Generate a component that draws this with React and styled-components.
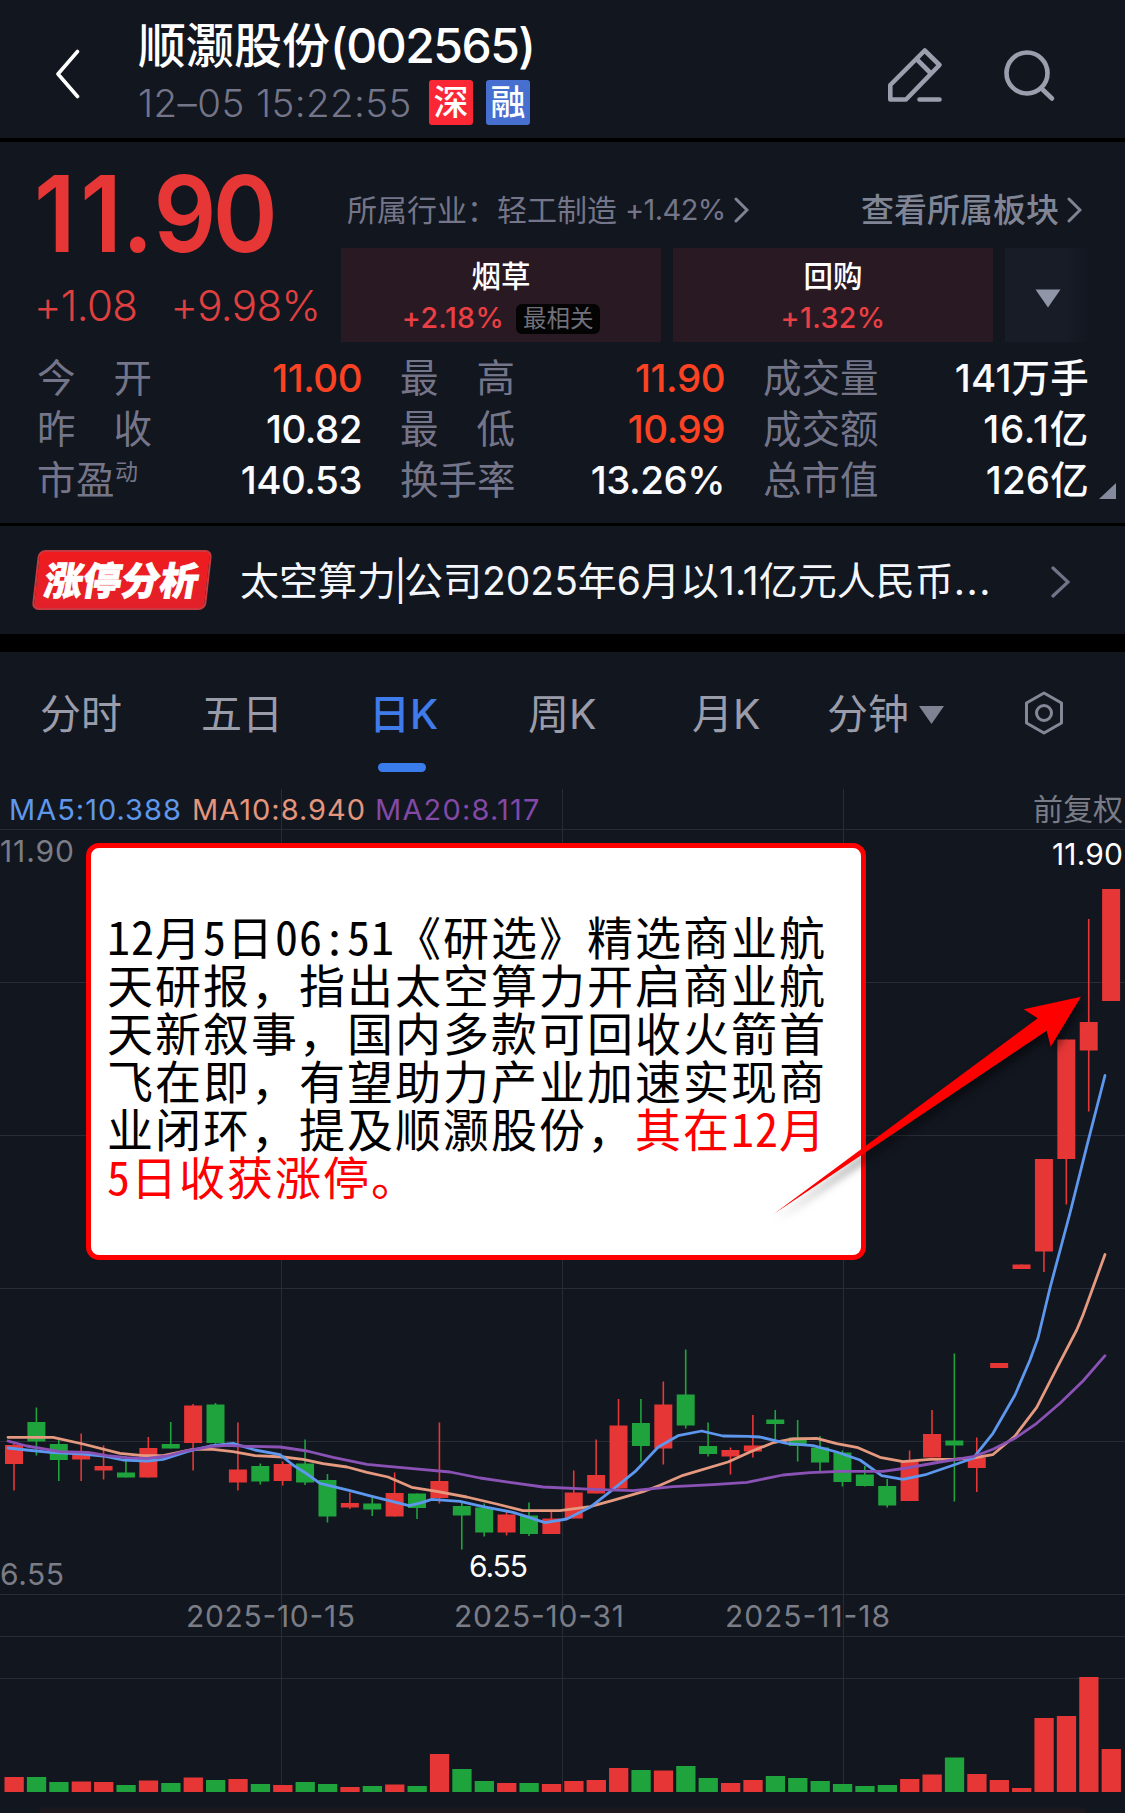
import styled, { createGlobalStyle, css } from 'styled-components';

const RED = '#e63636';
const GREEN = '#1fa33c';
const GRID = '#282c36';
const MUTED = '#747589';

const GlobalStyle = createGlobalStyle`
    * { box-sizing: border-box; }
    body {
        margin: 0;
        background: #12161f;
        font-family: Inter, "Noto Sans CJK SC", sans-serif;
        text-spacing-trim: space-all;
    }
`

const Screen = styled.div`
    width: 1125px;
    height: 1813px;
    overflow: hidden;
    background: #12161f;
    white-space: nowrap;
`

const Divider = styled.div`
    height: ${ p => p.$size }px;
    background: #000;
`

// header
const Header = styled.header`
    display: flex;
    height: 138px;
    padding: 0 63px 0 55px;
`

const BackIcon = styled.svg`
    width: 26px;
    height: 50px;
    margin: 49px 57px 0 0;
`

const Titles = styled.div`
    flex: 1;
    padding-top: 17px;
`

const Title = styled.h1`
    margin: 0;
    font-size: 48px;
    font-weight: 500;
    line-height: 57px;
    letter-spacing: -1.5px;
    color: #fff;
`

const TitleName = styled.span`
    letter-spacing: 0;
`

const SubTitle = styled.div`
    display: flex;
    align-items: center;
    height: 57px;
    color: ${ MUTED };
`

const Time = styled.span`
    width: 291px;
    font-size: 38.5px;
    font-weight: 350;
    letter-spacing: 0.4px;
`

const MarketTag = styled.span`
    width: 44px;
    height: 45px;
    margin-right: 13px;
    border-radius: 3px;
    background: ${ p => p.$color };
    color: #fff;
    font-size: 35px;
    font-weight: 500;
    line-height: 45px;
    text-align: center;
`

const HeaderIcons = styled.div`
    display: flex;
    gap: 60px;
    padding-top: 46px;
`

const HeaderIcon = styled.svg`
    width: 58px;
    height: 58px;
    fill: none;
    stroke: #9b9eac;
    stroke-width: 4.6;
    stroke-linejoin: round;
    stroke-linecap: round;
`

// quote
const Quote = styled.section`
    height: 381px;
`

const QuoteTop = styled.div`
    display: flex;
    height: 210px;
`

const PriceBox = styled.div`
    width: 341px;
    padding: 18px 0 0 34px;
    color: ${ RED };
`

const Price = styled.div`
    font-size: 106px;
    font-weight: 600;
    line-height: 107px;
    letter-spacing: -4px;
    transform: scaleX(0.93);
    transform-origin: left;
`

const Digit = styled.span`
    letter-spacing: ${ p => p.$space }px;
`

const Changes = styled.div`
    display: flex;
    gap: 33px;
    margin-top: 17px;
    font-size: 42px;
    font-weight: 350;
    line-height: 44px;
    letter-spacing: -0.6px;
    color: #e0403f;
`

const Sectors = styled.div`
    flex: 1;
    padding-top: 50px;
`

const IndustryRow = styled.div`
    display: flex;
    justify-content: space-between;
    align-items: center;
    height: 36px;
    padding: 0 43px 0 6px;
    line-height: 36px;
`

const IndustryLink = styled.span`
    display: flex;
    align-items: center;
    gap: 8px;
    font-size: ${ p => p.$size || 30 }px;
    color: ${ p => p.$bright ? '#808595' : MUTED };
    font-weight: ${ p => p.$bright ? 500 : 400 };
`

const Rate = styled.span`
    font-size: 29px;
    letter-spacing: -0.6px;
`

const Cards = styled.div`
    display: flex;
    gap: 12px;
    margin-top: 20px;
`

const Card = styled.div`
    width: 320px;
    height: 94px;
    padding-top: 7px;
    background: #291922;
    text-align: center;
    line-height: 42px;
    font-weight: 500;
`

const CardName = styled.div`
    font-size: 29.5px;
    color: #fff;
`

const CardRate = styled.div`
    display: flex;
    align-items: center;
    justify-content: center;
    gap: 12px;
    height: 42px;
    font-size: 28.5px;
    letter-spacing: 0.4px;
    color: #ea3f44;
`

const Related = styled.span`
    width: 84px;
    height: 30px;
    margin-top: 2px;
    border-radius: 6px;
    background: #040405;
    color: #70717a;
    font-size: 23.5px;
    font-weight: 400;
    line-height: 30px;
    letter-spacing: 0;
`

const MoreCard = styled.div`
    display: flex;
    align-items: center;
    justify-content: center;
    width: 86px;
    height: 94px;
    padding-top: 6px;
    background: linear-gradient(90deg, #181c27 70%, #12161f);
`

const Stats = styled.div`
    position: relative;
    display: grid;
    grid-template-columns: 325px 325px 326px;
    column-gap: 38px;
    padding: 1px 0 0 37px;
`

const Stat = styled.div`
    display: flex;
    justify-content: space-between;
    height: 51px;
    font-size: 38.5px;
    line-height: 51px;
`

const StatLabel = styled.span`
    display: flex;
    justify-content: space-between;
    width: 115px;
    color: ${ MUTED };
`

const Sup = styled.sup`
    font-size: 23px;
    line-height: 35px;
    vertical-align: top;
    margin-right: 14px;
`

const StatValue = styled.span`
    font-weight: 500;
    letter-spacing: ${ p => p.$space || -0.5 }px;
    color: ${ p => p.$up ? '#fb4323' : '#fbfcff' };
`

const Corner = styled.svg`
    position: absolute;
    left: 1099px;
    bottom: 7px;
    width: 17px;
    height: 16px;
`

// limit-up analysis
const Analysis = styled.section`
    display: flex;
    align-items: center;
    height: 108px;
    padding: 0 55px 0 35px;
`

const AnalysisTag = styled.div`
    width: 174px;
    height: 60px;
    border: 2px solid #c93a40;
    border-radius: 7px;
    background: linear-gradient(#f01c1e, #e2202a);
    transform: skewX(-6.5deg);
    color: #fff;
    font-size: 38.5px;
    font-weight: 900;
    line-height: 58px;
    text-align: center;
    -webkit-text-stroke: 0.8px #fff;
`

const TagText = styled.span`
    display: inline-block;
    transform: skewX(-3deg);
`

const AnalysisText = styled.div`
    flex: 1;
    padding: 2px 0 0 31px;
    font-size: 39px;
    line-height: 48px;
    color: #f4f6fb;
`

const AnalysisMore = styled.div`
    display: flex;
    padding-top: 4px;
`

const Bar = styled.span`
    margin: 0 -3px 0 -2px;
`

const Dots = styled.span`
    letter-spacing: 1.6px;
`

// tabs
const Tabs = styled.nav`
    position: relative;
    display: flex;
    height: 137px;
    padding-left: 40px;
    font-size: 41px;
    line-height: 124px;
    color: #9a9caa;
`

const Tab = styled.div`
    width: ${ p => p.$width }px;
    ${ p => p.$active && css`
        color: #3f7bea;
        font-weight: 500;
        &::after {
            content: '';
            display: block;
            width: 48px;
            height: 9px;
            margin: -13px 0 0 9px;
            border-radius: 5px;
            background: #3b7cec;
        }
    ` }
`

const TabArrow = styled.svg`
    width: 26px;
    height: 19px;
    margin-left: 10px;
    vertical-align: 4px;
`

const SettingIcon = styled.svg`
    width: 44px;
    height: 46px;
    margin-top: 38px;
`

// chart
const ChartArea = styled.section`
    position: relative;
    height: 1024px;
`

const Drawing = styled.svg`
    position: absolute;
    inset: 0;
`

const Legend = styled.div`
    position: relative;
    display: flex;
    height: 41px;
    padding: 0 2px 0 9px;
    font-size: 29px;
    line-height: 41px;
`

const LegendItem = styled.span`
    width: 183px;
    letter-spacing: ${ p => p.$space || 1 }px;
    color: ${ p => p.$color };
`

const Adjust = styled.span`
    margin-left: auto;
    font-size: 30px;
    color: #797c86;
`

const AxisText = styled.text`
    font-size: 30px;
    fill: ${ p => p.$bright ? '#fff' : '#7a7d86' };
`

// note over the chart
const Note = styled.div`
    position: absolute;
    left: 86px;
    top: 54px;
    width: 780px;
    height: 417px;
    padding: 63px 0 0 16px;
    border: 5px solid #fe0000;
    border-radius: 13px;
    background: #fff;
    color: #000;
    font-family: "Noto Sans CJK SC", sans-serif;
    font-size: 46px;
    line-height: 48px;
    letter-spacing: 2px;
`

const NoteLine = styled.div`
    height: 48px;
`

const Half = styled.span`
    font-feature-settings: "hwid";
    letter-spacing: 1px;
`

const Mark = styled.span`
    color: #fe0000;
`

const Arrow = styled.svg`
    position: absolute;
    left: 760px;
    top: 191px;
    filter: drop-shadow(3px 6px 4px rgba(0, 0, 0, 0.5));
`

const BottomBar = styled.div`
    position: absolute;
    left: 40px;
    right: 40px;
    bottom: 0;
    height: 6px;
    background: linear-gradient(#15171f, #22191d);
`

// up flag, body top, body bottom, high, low
const candles = [
    [1, 1445, 1464, 1443, 1490.5], [0, 1422, 1441.5, 1407.5, 1455.5], [0, 1444, 1460, 1439, 1481],
    [1, 1455, 1459.5, 1433.5, 1481], [1, 1466, 1470.5, 1445.5, 1479.5], [0, 1472.5, 1477.5, 1460, 1477.5],
    [1, 1448, 1477.5, 1437, 1477.5], [0, 1444, 1448.5, 1422, 1448.5], [1, 1405.5, 1443, 1404, 1470.5],
    [0, 1404.5, 1443, 1403, 1445], [1, 1469.5, 1482.5, 1422.5, 1490.5], [0, 1466, 1481.5, 1463.5, 1484.5],
    [1, 1464, 1481, 1461.5, 1485.5], [0, 1463.5, 1482.5, 1439.5, 1485], [0, 1480, 1516.5, 1474, 1522.5],
    [1, 1503, 1507.5, 1492.5, 1509], [0, 1503.5, 1509.5, 1495.5, 1516], [1, 1493, 1516.5, 1472.5, 1516.5],
    [0, 1493.5, 1508, 1493.5, 1519], [1, 1481, 1498, 1422.5, 1503.5], [0, 1506, 1515.5, 1501.5, 1549.5],
    [0, 1507.5, 1532.5, 1503.5, 1536.5], [1, 1514.5, 1532.5, 1511.5, 1535.5], [0, 1515.5, 1534, 1502.5, 1536],
    [1, 1518.5, 1534, 1511.5, 1534], [1, 1492.5, 1518.5, 1470.5, 1518.5], [1, 1475, 1493.5, 1439.5, 1493.5],
    [1, 1425.5, 1488.5, 1399, 1490], [0, 1423, 1446, 1399, 1461.5], [1, 1404.5, 1448.5, 1381.5, 1464.5],
    [0, 1394.5, 1425.5, 1349.5, 1428.5], [0, 1446, 1454, 1422.5, 1456.5], [1, 1450, 1456.5, 1447.5, 1474.5],
    [1, 1445.5, 1451.5, 1415, 1457.5], [0, 1419.5, 1424, 1410, 1443.5], [0, 1437.5, 1446, 1420, 1461.5],
    [0, 1447.5, 1462.5, 1436, 1471.5], [0, 1452.5, 1482, 1450.5, 1486.5], [0, 1474.5, 1486, 1466, 1486.5],
    [0, 1486, 1505.5, 1479, 1507.5], [1, 1461.5, 1501, 1450.5, 1501], [1, 1434, 1457.5, 1410, 1457.5],
    [0, 1440.5, 1445.5, 1353.5, 1501.5], [1, 1457.5, 1468, 1437.5, 1492], [1, 1363, 1368, 1363, 1368],
    [1, 1264.5, 1269, 1264.5, 1269], [1, 1159, 1251.5, 1159, 1272], [1, 1039.5, 1159, 1039.5, 1204.5],
    [1, 1022, 1050.5, 919, 1111.5], [1, 889, 1001, 889, 1001],
]

const volumes = [
    15, 15, 10, 10.5, 10, 7, 11.5, 9, 14.5, 12, 13, 8, 7, 10, 8, 5, 6, 7.5, 6, 38, 23, 11, 9, 9, 8,
    11, 12, 24, 22, 21.5, 26, 14, 9, 12, 16, 14, 11, 8, 6, 7, 13, 17.5, 34.5, 18, 12, 4, 74, 76, 115, 43,
]

const averages = [
    {
        color: '#e59a80',
        points: '8,1437.3 53,1437.3 83,1444 120,1453.3 143,1455.7 163,1455.7 193,1449.3 213,1449.3 233,1451.7 255,1455.7 283,1457 303,1459.3 323,1463.7 347,1467 367,1472.3 388,1477 411.7,1487.3 436.7,1491.3 466.7,1497 496.7,1504 523,1510.7 560,1510.7 590,1506.7 613,1500.3 643,1491.7 660,1485.3 683,1475.3 728,1462 750,1452 773,1442.7 793,1439 816.7,1438.3 836.7,1443.7 858,1447.7 880,1457.3 903,1461.7 930,1459.3 953,1459.3 973,1458 992.7,1454.7 1015,1436 1036.7,1407.3 1056.7,1368.3 1076.7,1330 1083,1315 1105,1254.5',
    },
    {
        color: '#5e97ee',
        points: '8,1448 26.7,1450 50,1452.3 83,1454 103,1456 123,1460 147,1461 163,1459.3 187,1451.7 210,1446 233,1443.3 255,1450 280,1454.7 293,1465 307,1474 320,1483.3 350,1490.7 373,1496.7 409,1505.7 421.7,1502.7 431.7,1499.3 460,1501.3 483,1506.7 513,1512.3 526.7,1516.7 545,1522.7 566.7,1519 590,1507.3 613,1489.3 635,1471.7 658,1447.3 678,1435.7 701.7,1431 723,1436 748,1436.3 760,1437 786.7,1443.3 813,1445.7 836.7,1452 860,1460 881.7,1475.7 903,1479.3 926.7,1474.3 953,1465.3 973,1458.3 993,1433.3 1015,1395 1030,1360 1038,1338 1050,1288 1070,1213 1086.7,1146.7 1105,1075.5',
    },
    {
        color: '#8a52b4',
        points: '8,1441 26.7,1446 60,1451.7 88,1452.3 107,1455.7 127,1457.7 147,1458.3 167,1456 187,1450.7 210,1446.7 227,1445.3 247,1446.3 280,1447 307,1451 333,1457.3 367,1464.3 388,1466.3 410,1468.3 450,1472 480,1478 510,1482.3 543,1487 593,1489.3 633,1490.7 673,1486.7 713,1484.7 747,1482.3 783,1475 810,1472.7 840,1471.3 883,1471.3 906.7,1468 940,1462 973,1456.7 993,1449.3 1015,1438.3 1036.7,1423.3 1060,1403.3 1083,1381 1105,1355.7',
    },
]

const centerOf = i => 14 + i * 22.39

const Chevron = ({ width = 15, height = 26, stroke = 3, color = '#808393' }) => (
    <svg width={ width } height={ height } viewBox={ `0 0 ${ width } ${ height }` } fill="none" stroke={ color } strokeWidth={ stroke } strokeLinecap="round">
        <path d={ `M2 2L${ width - 2 } ${ height / 2 }L2 ${ height - 2 }` } />
    </svg>
)

const StatItem = ({ label, sup, value, up, space }) => (
    <Stat>
        <StatLabel>
            { label.split('').map(char => <span key={ char }>{ char }</span>) }
            { sup && <Sup>{ sup }</Sup> }
        </StatLabel>
        <StatValue $up={ up } $space={ space }>{ value }</StatValue>
    </Stat>
)

const KChart = () => (
    <Drawing width="1125" height="1024" viewBox="0 789 1125 1024">
        <g stroke={ GRID } strokeWidth="1">
            { [829.5, 982.5, 1135.5, 1288.5, 1441.5, 1594.5, 1636.5, 1678.5].map(y => (
                <line key={ y } x1="0" x2="1125" y1={ y } y2={ y } />
            )) }
            { [281.5, 562.5, 843.5].map(x => (
                <line key={ x } x1={ x } x2={ x } y1="789" y2="1792" />
            )) }
        </g>
        { candles.map(([up, top, bottom, high, low], i) => (
            <g key={ i } fill={ up ? RED : GREEN }>
                <rect x={ centerOf(i) - 0.8 } y={ high } width="1.6" height={ low - high } />
                <rect x={ centerOf(i) - 9 } y={ top } width="18" height={ bottom - top } />
            </g>
        )) }
        { averages.map(line => (
            <polyline key={ line.color } points={ line.points } fill="none" stroke={ line.color } strokeWidth="2.8" strokeLinejoin="round" strokeLinecap="round" />
        )) }
        { volumes.map((height, i) => (
            <rect key={ i } x={ centerOf(i) - 9.5 } y={ 1792 - height } width="19.3" height={ height } fill={ candles[i][0] ? RED : GREEN } />
        )) }
        <AxisText x="0" y="862" textLength="74">11.90</AxisText>
        <AxisText x="0" y="1585" textLength="64">6.55</AxisText>
        <AxisText x="1052" y="865" textLength="71" $bright>11.90</AxisText>
        <AxisText x="469" y="1576.5" textLength="59" $bright>6.55</AxisText>
        <AxisText x="186" y="1627" textLength="169">2025-10-15</AxisText>
        <AxisText x="454" y="1627" textLength="170">2025-10-31</AxisText>
        <AxisText x="725" y="1627" textLength="165">2025-11-18</AxisText>
    </Drawing>
)

const App = () => (
    <>
        <GlobalStyle />
        <Screen>
            <Header>
                <BackIcon viewBox="0 0 26 50" fill="none" stroke="#fff" strokeWidth="3.6" strokeLinecap="round" strokeLinejoin="round">
                    <path d="M22.5 2.5L3 25L22.5 47.5" />
                </BackIcon>
                <Titles>
                    <Title><TitleName>顺灏股份</TitleName>(002565)</Title>
                    <SubTitle>
                        <Time>12–05 15:22:55</Time>
                        <MarketTag $color="#fb2735">深</MarketTag>
                        <MarketTag $color="#466fd0">融</MarketTag>
                    </SubTitle>
                </Titles>
                <HeaderIcons>
                    <HeaderIcon viewBox="886 46 58 58">
                        <path d="M924.7 50.5L939.5 65L906 99.5H890.3V85Z" />
                        <path d="M917.5 60L930.5 73M919.5 99.5H939.5" />
                    </HeaderIcon>
                    <HeaderIcon viewBox="1004 46 58 58">
                        <circle cx="1027" cy="73" r="20.5" />
                        <path d="M1041 88L1052 98.5" />
                    </HeaderIcon>
                </HeaderIcons>
            </Header>
            <Divider $size={ 4 } />
            <Quote>
                <QuoteTop>
                    <PriceBox>
                        <Price><Digit $space={ 5 }>1</Digit><Digit $space={ 0 }>1.</Digit>90</Price>
                        <Changes><span>+1.08</span><span>+9.98%</span></Changes>
                    </PriceBox>
                    <Sectors>
                        <IndustryRow>
                            <IndustryLink>
                                <span>所属行业：轻工制造</span>
                                <Rate>+1.42%</Rate>
                                <Chevron />
                            </IndustryLink>
                            <IndustryLink $size={ 33 } $bright>
                                查看所属板块
                                <Chevron />
                            </IndustryLink>
                        </IndustryRow>
                        <Cards>
                            <Card>
                                <CardName>烟草</CardName>
                                <CardRate>+2.18%<Related>最相关</Related></CardRate>
                            </Card>
                            <Card>
                                <CardName>回购</CardName>
                                <CardRate>+1.32%</CardRate>
                            </Card>
                            <MoreCard>
                                <svg width="26" height="19" fill="#9095a8"><path d="M0.5 0.500H25.5L13 18.5Z" /></svg>
                            </MoreCard>
                        </Cards>
                    </Sectors>
                </QuoteTop>
                <Stats>
                    <StatItem label="今开" value="11.00" up />
                    <StatItem label="最高" value="11.90" up />
                    <StatItem label="成交量" value="141万手" space={ 0.2 } />
                    <StatItem label="昨收" value="10.82" />
                    <StatItem label="最低" value="10.99" up />
                    <StatItem label="成交额" value="16.1亿" space={ 0.8 } />
                    <StatItem label="市盈" sup="动" value="140.53" />
                    <StatItem label="换手率" value="13.26%" />
                    <StatItem label="总市值" value="126亿" space={ 0.2 } />
                    <Corner fill="#858a9c"><path d="M17 0V16H0Z" /></Corner>
                </Stats>
            </Quote>
            <Divider $size={ 3 } />
            <Analysis>
                <AnalysisTag><TagText>涨停分析</TagText></AnalysisTag>
                <AnalysisText>太空算力<Bar>|</Bar>公司2025年6月以1.1亿元人民币<Dots>...</Dots></AnalysisText>
                <AnalysisMore>
                    <Chevron width={ 19 } height={ 32 } stroke={ 3.2 } color="#717488" />
                </AnalysisMore>
            </Analysis>
            <Divider $size={ 18 } />
            <Tabs>
                <Tab $width={ 161 }>分时</Tab>
                <Tab $width={ 168 }>五日</Tab>
                <Tab $width={ 159 } $active>日K</Tab>
                <Tab $width={ 164 }>周K</Tab>
                <Tab $width={ 135 }>月K</Tab>
                <Tab $width={ 195 }>
                    分钟
                    <TabArrow fill="#7f8293"><path d="M0 0H25L12.5 18Z" /></TabArrow>
                </Tab>
                <SettingIcon viewBox="0 0 44 46" fill="none" stroke="#858797" strokeWidth="3" strokeLinejoin="round">
                    <path d="M22 3L39.5 13V33L22 43L4.5 33V13Z" />
                    <circle cx="22" cy="23" r="7.5" />
                </SettingIcon>
            </Tabs>
            <ChartArea>
                <KChart />
                <Legend>
                    <LegendItem $color="#5f97ea">MA5:10.388</LegendItem>
                    <LegendItem $color="#e3967d">MA10:8.940</LegendItem>
                    <LegendItem $color="#8249a6" $space={ 1.2 }>MA20:8.117</LegendItem>
                    <Adjust>前复权</Adjust>
                </Legend>
                <Note>
                    <NoteLine><Half>12</Half>月<Half>5</Half>日<Half>06:51</Half>《研选》精选商业航</NoteLine>
                    <NoteLine>天研报，指出太空算力开启商业航</NoteLine>
                    <NoteLine>天新叙事，国内多款可回收火箭首</NoteLine>
                    <NoteLine>飞在即，有望助力产业加速实现商</NoteLine>
                    <NoteLine>业闭环，提及顺灏股份，<Mark>其在<Half>12</Half>月</Mark></NoteLine>
                    <NoteLine><Mark><Half>5</Half>日收获涨停。</Mark></NoteLine>
                </Note>
                <Arrow width="340" height="250" viewBox="760 980 340 250">
                    <path fill="#fe0000" d="M773.7 1214L1037.7 1018.3L1023.7 1009.3L1081 996.7L1050.7 1046.7L1046.7 1030.7Z" />
                </Arrow>
                <BottomBar />
            </ChartArea>
        </Screen>
    </>
)

export default App
